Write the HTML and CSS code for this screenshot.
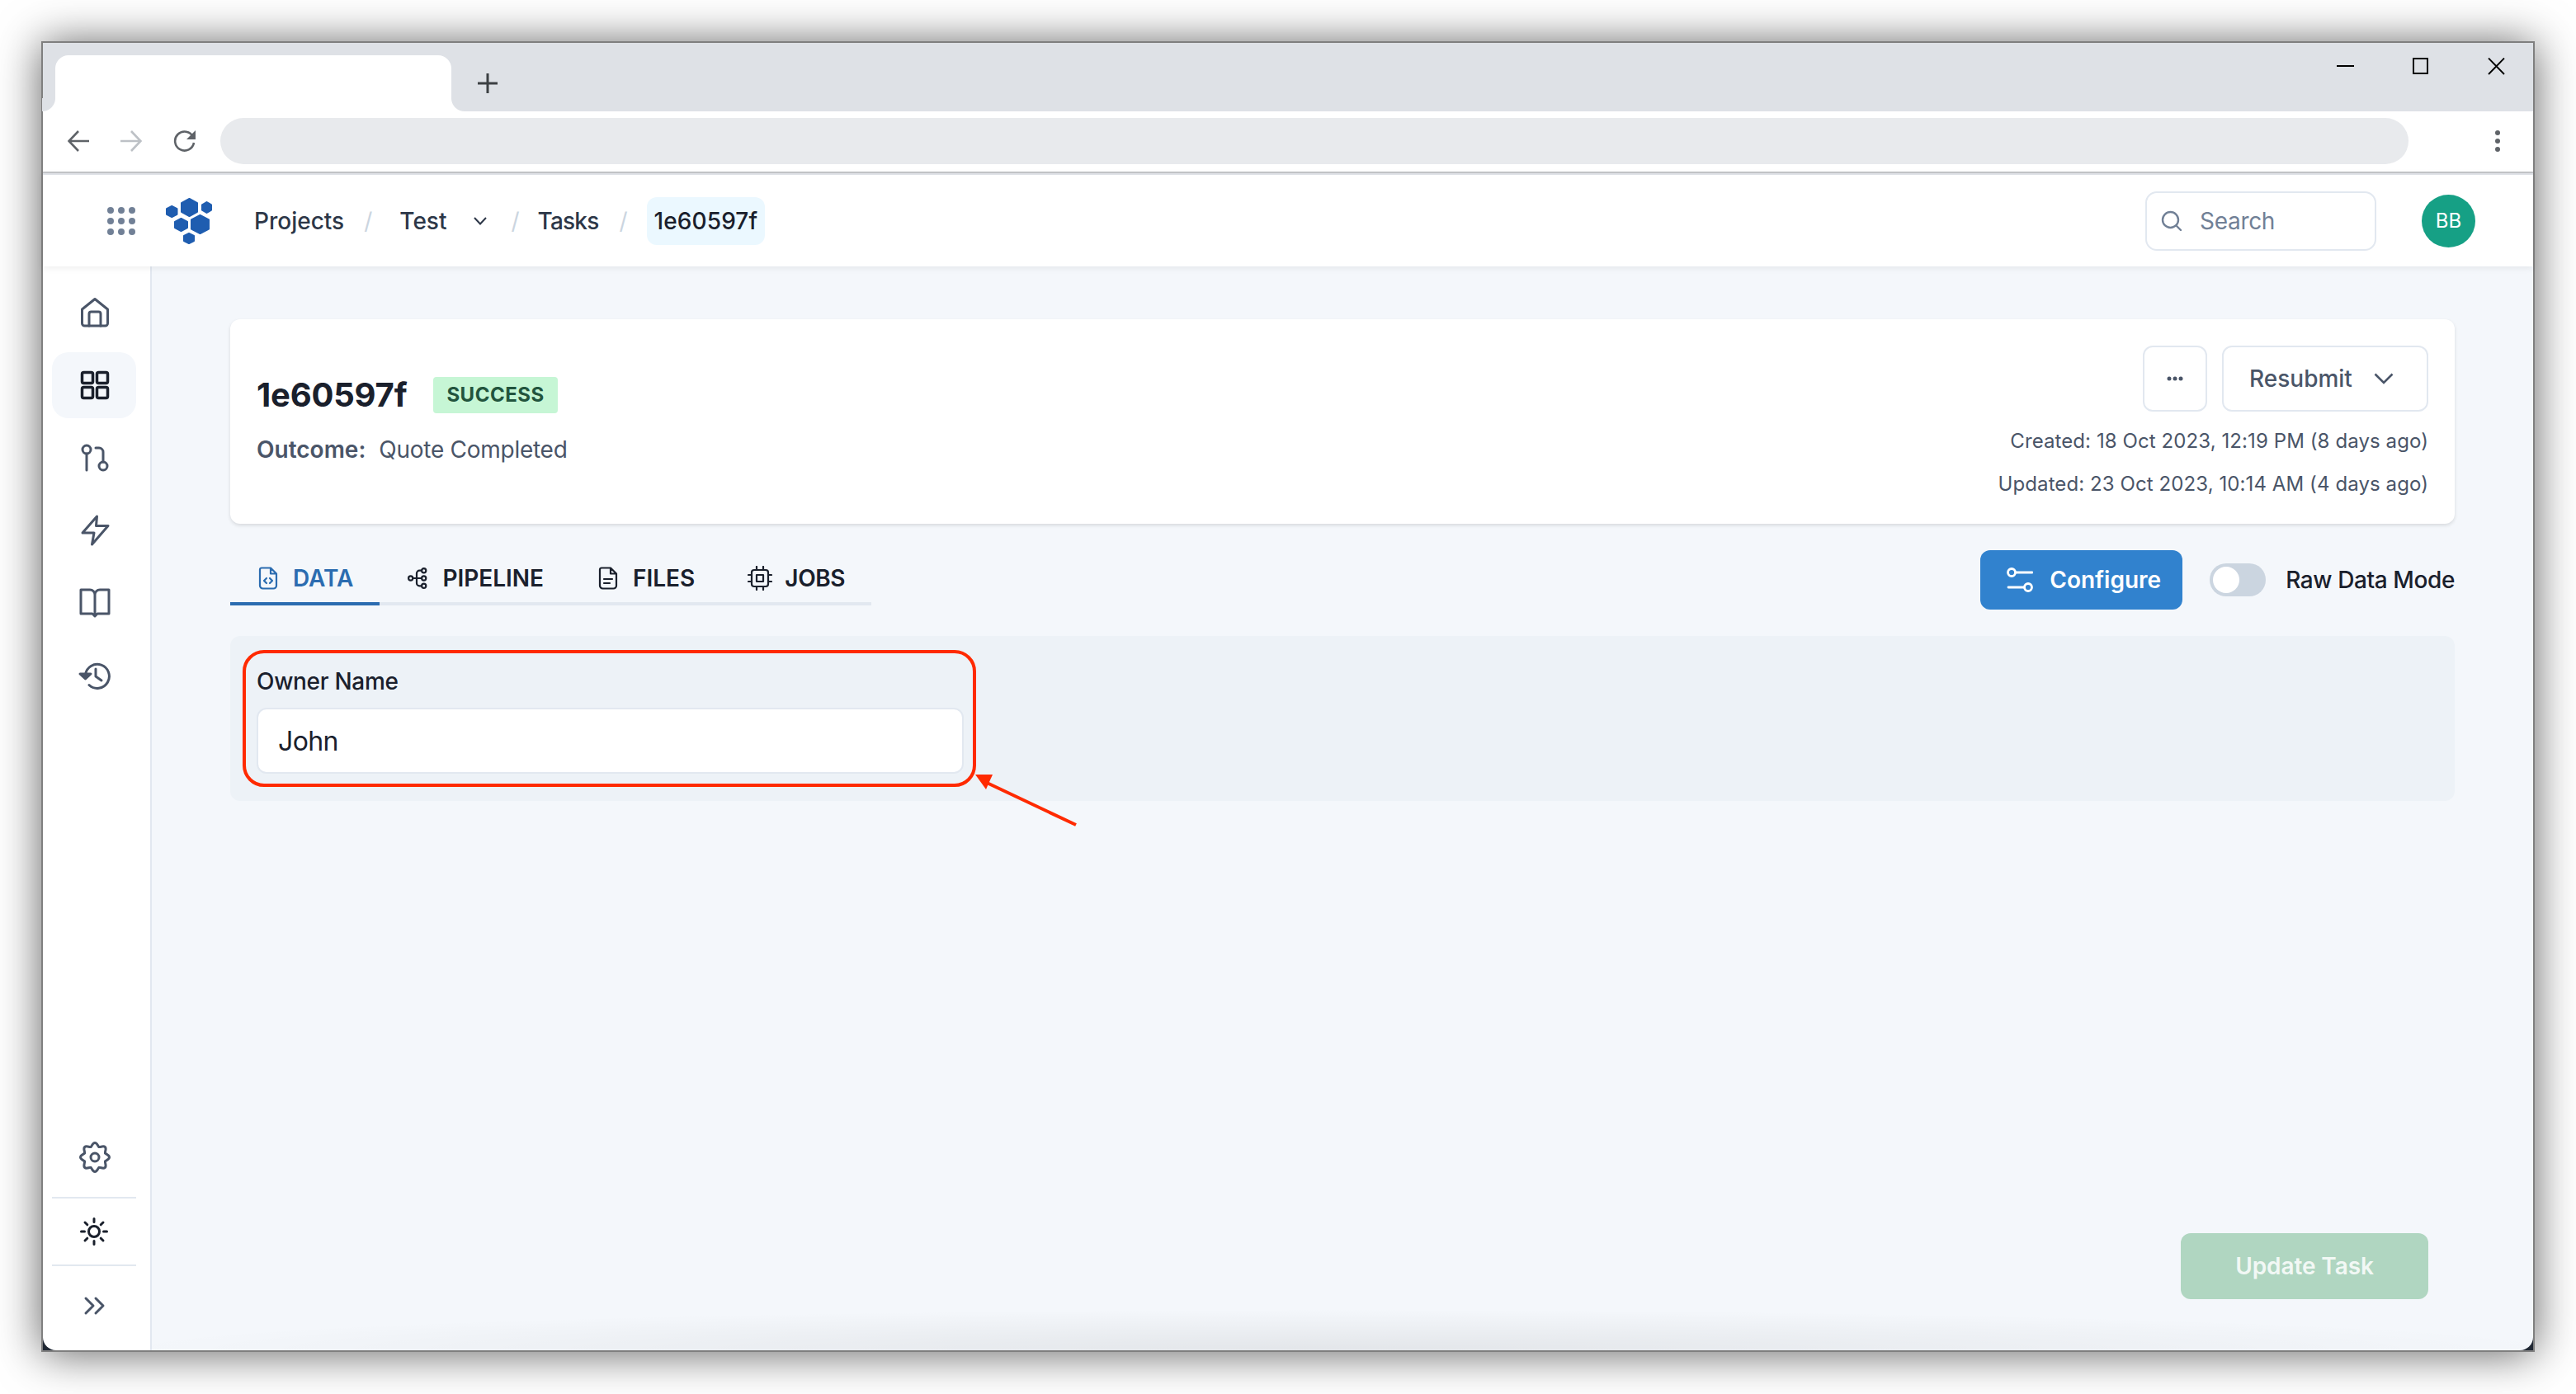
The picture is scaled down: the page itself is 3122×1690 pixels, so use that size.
FILE: index.html
```html
<!DOCTYPE html>
<html lang="en">
<head>
<meta charset="utf-8">
<title>Task 1e60597f</title>
<link rel="stylesheet" href="styles.css">
</head>
<body>
<div class="window">
  <div class="tabstrip">
    <div class="tab"></div>
    <svg class="newtab" width="24" height="24" viewBox="0 0 24 24"><path d="M12 0V24M0 12H24" stroke="#3c4043" stroke-width="3" fill="none"/></svg>
    <div class="winctrls">
      <svg class="winmin" width="22" height="22" viewBox="0 0 22 22"><path d="M1 10H22" stroke="#000" stroke-width="2"/></svg>
      <svg width="22" height="22" viewBox="0 0 22 22"><rect x="4" y="1" width="17" height="18" fill="none" stroke="#000" stroke-width="2"/></svg>
      <svg width="22" height="22" viewBox="0 0 22 22"><path d="M2 0.500L21 20M21 0.500L2 20" stroke="#000" stroke-width="1.800" fill="none"/></svg>
    </div>
  </div>
  <div class="toolbar">
    <svg class="navicon" width="26" height="26" viewBox="0 0 26 26"><path d="M26 13H2M13 1L1.500 13L13 25" stroke="#5f6368" stroke-width="2.600" fill="none"/></svg>
    <svg class="navicon" width="26" height="26" viewBox="0 0 26 26"><path d="M0 13H24M13 1L24.500 13L13 25" stroke="#bdc1c6" stroke-width="2.600" fill="none"/></svg>
    <svg class="navicon" width="28" height="26" viewBox="0 0 28 26"><path d="M24 8A11.500 11.500 0 1 0 25 15" stroke="#5f6368" stroke-width="2.600" fill="none"/><path d="M27 0V11H16Z" fill="#5f6368"/></svg>
    <div class="omnibox"></div>
    <div class="kebab"><i></i><i></i><i></i></div>
  </div>
  <header class="apphead">
    <svg class="appgrid" width="34" height="34" viewBox="0 0 34 34" fill="#718096"><circle cx="4" cy="4" r="4"/><circle cx="17" cy="4" r="4"/><circle cx="30" cy="4" r="4"/><circle cx="4" cy="17" r="4"/><circle cx="17" cy="17" r="4"/><circle cx="30" cy="17" r="4"/><circle cx="4" cy="30" r="4"/><circle cx="17" cy="30" r="4"/><circle cx="30" cy="30" r="4"/></svg>
    <svg class="logo" width="56" height="56" viewBox="0 0 56 56"><polygon points="7.250,10 13.500,13.250 13.500,19.750 7.250,23 1,19.750 1,13.250"/><polygon points="28.500,1 38,6.250 38,16.750 28.500,22 19,16.750 19,6.250"/><polygon points="49.500,5 55,8.250 55,14.750 49.500,18 44,14.750 44,8.250"/><polygon points="18.500,25 26,29 26,36 18.500,40 11,36 11,29"/><polygon points="41.500,21 52,26.500 52,37.500 41.500,43 31,37.500 31,26.500"/><polygon points="28,43 34,46 34,52 28,55 22,52 22,46"/></svg>
    <nav class="crumbs">
      <span class="crumb">Projects</span>
      <span class="sep">/</span>
      <span class="crumb">Test</span>
      <svg class="crumbchev" width="16" height="10" viewBox="0 0 16 10"><path d="M1 1L8 8.500L15 1" stroke="#2d3748" stroke-width="2" fill="none"/></svg>
      <span class="sep sep-b">/</span>
      <span class="crumb crumb-tight">Tasks</span>
      <span class="sep sep-c">/</span>
      <span class="crumb chip">1e60597f</span>
    </nav>
    <div class="search">
      <svg width="26" height="26" viewBox="0 0 26 26"><circle cx="11.500" cy="11.500" r="9.500" stroke="#718096" stroke-width="2.400" fill="none"/><path d="M18.500 18.500L24 24" stroke="#718096" stroke-width="2.400" fill="none" stroke-linecap="round"/></svg>
      <span>Search</span>
    </div>
    <div class="avatar">BB</div>
  </header>
  <div class="appbody">
    <aside class="sidebar">
      <div class="sideitem"><svg width="40" height="40" viewBox="0 0 40 40" class="sicon"><path d="M4.500 16L20 3.500L35.500 16V33A3 3 0 0 1 32.500 36H7.500A3 3 0 0 1 4.500 33Z"/><path d="M13 36V21.500A2.500 2.500 0 0 1 15.500 19H24.500A2.500 2.500 0 0 1 27 21.500V36"/></svg></div>
      <div class="sideitem active"><svg width="40" height="40" viewBox="0 0 40 40" class="sicon"><rect x="4.500" y="4.500" width="13" height="13" rx="2"/><rect x="22.500" y="4.500" width="13" height="13" rx="2"/><rect x="4.500" y="22.500" width="13" height="13" rx="2"/><rect x="22.500" y="22.500" width="13" height="13" rx="2"/></svg></div>
      <div class="sideitem"><svg width="40" height="40" viewBox="0 0 40 40" class="sicon"><circle cx="10" cy="10" r="5"/><path d="M10 15V35"/><circle cx="30" cy="30" r="5"/><path d="M30 25V13A5 5 0 0 0 25 8H21"/></svg></div>
      <div class="sideitem"><svg width="40" height="40" viewBox="0 0 40 40" class="sicon"><path d="M22.500 3L5 23H19L16.500 37L36 14.500H21.500Z"/></svg></div>
      <div class="sideitem"><svg width="40" height="40" viewBox="0 0 40 40" class="sicon"><path d="M20 10A6 6 0 0 0 14 4H3V33H17L20 36L23 33H37V4H26A6 6 0 0 0 20 10V34"/></svg></div>
      <div class="sideitem"><svg width="40" height="40" viewBox="0 0 40 40" class="sicon"><path d="M8.500 19A14.500 14.500 0 1 1 13 31.500"/><path d="M21 12V21L28 26"/><path d="M2 18L8.500 24L15 18H2Z" class="solid"/></svg></div>
      <div class="sidefoot">
        <div class="sideitem"><svg width="40" height="40" viewBox="0 0 40 40" class="sicon"><circle cx="20" cy="20" r="5"/><path id="tooth" d="M14.830 7.530C16.300 6.920 17 2.500 20 2.500S23.700 6.920 25.170 7.530"/><use href="#tooth" transform="rotate(45 20 20)"/><use href="#tooth" transform="rotate(90 20 20)"/><use href="#tooth" transform="rotate(135 20 20)"/><use href="#tooth" transform="rotate(180 20 20)"/><use href="#tooth" transform="rotate(225 20 20)"/><use href="#tooth" transform="rotate(270 20 20)"/><use href="#tooth" transform="rotate(315 20 20)"/></svg></div>
        <div class="sidediv"></div>
        <div class="sideitem sun"><svg width="36" height="36" viewBox="0 0 36 36" class="sicon dark"><circle cx="18" cy="18" r="6.500"/><path d="M18 2.500V6.500M18 29.500V33.500M2.500 18H6.500M29.500 18H33.500M7 7L9.800 9.800M26.200 26.200L29 29M7 29L9.800 26.200M26.200 9.800L29 7"/></svg></div>
        <div class="sidediv"></div>
        <div class="sideitem"><svg width="40" height="40" viewBox="0 0 40 40" class="sicon"><path d="M9 11L18 20L9 29M21 11L30 20L21 29"/></svg></div>
      </div>
    </aside>
    <main class="content">
      <section class="card">
        <div class="cardleft">
          <div class="titlerow">
            <h1 class="title">1e60597f</h1>
            <span class="badge">SUCCESS</span>
          </div>
          <p class="outcome"><b>Outcome:</b><span class="outcomeval">Quote Completed</span></p>
        </div>
        <div class="cardright">
          <div class="actions">
            <button class="btn btn-more">
              <svg width="20" height="6" viewBox="0 0 20 6" fill="#4a5568"><circle cx="3" cy="3" r="2.500"/><circle cx="10" cy="3" r="2.500"/><circle cx="17" cy="3" r="2.500"/></svg>
            </button>
            <button class="btn btn-resubmit">Resubmit
              <svg width="24" height="14" viewBox="0 0 24 14"><path d="M1.500 1.500L12 12L22.500 1.500" stroke="#4a5568" stroke-width="2.600" fill="none"/></svg>
            </button>
          </div>
          <p class="stamp">Created: 18 Oct 2023, 12:19 PM (8 days ago)</p>
          <p class="stamp">Updated: 23 Oct 2023, 10:14 AM (4 days ago)</p>
        </div>
      </section>
      <div class="tabsrow">
        <div class="tabs">
          <div class="tabitem on">
            <svg width="28" height="28" viewBox="0 0 28 28" class="ticon"><path d="M6 1.500H17L24 8.500V23A3.500 3.500 0 0 1 20.500 26.500H7.500A3.500 3.500 0 0 1 4 23V3.500A2 2 0 0 1 6 1.500ZM17 1.500V8.500H24"/><path d="M12 14L9 17L12 20M16 14L19 17L16 20"/></svg>
            <span>DATA</span>
          </div>
          <div class="tabitem">
            <svg width="28" height="28" viewBox="0 0 28 28" class="ticon"><circle cx="5.700" cy="14" r="2.600"/><circle cx="21.700" cy="4.700" r="2.600"/><circle cx="21.700" cy="14" r="2.600"/><circle cx="21.700" cy="23.300" r="2.600"/><path d="M8.300 14H19M13 14V8A3.300 3.300 0 0 1 16.300 4.700H19M13 14V20A3.300 3.300 0 0 0 16.300 23.300H19"/></svg>
            <span>PIPELINE</span>
          </div>
          <div class="tabitem">
            <svg width="28" height="28" viewBox="0 0 28 28" class="ticon"><path d="M6 1.500H17L24 8.500V23A3.500 3.500 0 0 1 20.500 26.500H7.500A3.500 3.500 0 0 1 4 23V3.500A2 2 0 0 1 6 1.500ZM17 1.500V8.500H24"/><path d="M9 15H19M9 20H16"/></svg>
            <span>FILES</span>
          </div>
          <div class="tabitem tabitem-jobs">
            <svg width="30" height="30" viewBox="0 0 30 30" class="ticon"><rect x="5" y="5" width="20" height="20" rx="3"/><rect x="11" y="11" width="8" height="8"/><path d="M11 1V5M19 1V5M11 25V29M19 25V29M1 11H5M1 19H5M25 11H29M25 19H29"/></svg>
            <span>JOBS</span>
          </div>
        </div>
        <div class="tabtools">
          <button class="configure">
            <svg width="32" height="32" viewBox="0 0 32 32"><circle cx="6" cy="7" r="4.500"/><path d="M11 7H31M2 25H21"/><circle cx="26" cy="25" r="4.500"/></svg>
            Configure
          </button>
          <span class="toggle"><i></i></span>
          <span class="rawlabel">Raw Data Mode</span>
        </div>
      </div>
      <section class="panel">
        <label class="fieldlabel">Owner Name</label>
        <div class="field">John</div>
      </section>
      <button class="update">Update Task</button>
    </main>
  </div>
  <svg class="annot" width="1020" height="225" viewBox="0 0 1020 225">
    <rect x="2" y="2" width="885" height="162" rx="24" fill="none" stroke="#ff2a00" stroke-width="4"/>
    <path d="M1010 212L900 160" stroke="#ff2a00" stroke-width="4" fill="none"/>
    <path d="M888 151L909 151L901 169Z" fill="#ff2a00"/>
  </svg>
</div>
</body>
</html>
```
FILE: styles.css
```css
* { box-sizing: border-box; }
html, body { margin: 0; padding: 0; background: #fff; }
body { font-family: "Inter", "Liberation Sans", sans-serif; color: #1a202c; height: 1690px; overflow: hidden; padding: 50px 0 0 50px; }
p, h1 { margin: 0; }
button { font-family: inherit; cursor: pointer; }

.window {
  position: relative;
  width: 3022px;
  height: 1589px;
  border: 2px solid #7f7f7f;
  display: flex;
  flex-direction: column;
  background: #1f2733;
  box-shadow: 0 2px 50px rgba(0, 0, 0, .62);
}

/* browser chrome */
.tabstrip {
  height: 83px;
  flex: none;
  background: #dee1e6;
  padding: 15px 0 0 15px;
  display: flex;
}
.tab {
  position: relative;
  width: 480px;
  height: 68px;
  background: #fff;
  border-radius: 16px 16px 0 0;
}
.tab::before, .tab::after {
  content: "";
  position: absolute;
  bottom: 0;
  width: 16px;
  height: 16px;
}
.tab::before { left: -16px; background: radial-gradient(circle at 0 0, #dee1e6 15.5px, #fff 16.5px); }
.tab::after { right: -16px; background: radial-gradient(circle at 100% 0, #dee1e6 15.5px, #fff 16.5px); }
.newtab { margin: 22px 0 0 32px; flex: none; }
.winctrls {
  margin-left: auto;
  margin-right: 34px;
  margin-top: 3px;
  display: flex;
  gap: 71px;
}
.winmin { margin-right: -3px; }
.toolbar {
  height: 75px;
  flex: none;
  background: #fff;
  border-bottom: 2px solid #c4c6c9;
  display: flex;
  align-items: center;
  padding: 0 0 2px 30px;
}
.navicon { flex: none; margin-right: 38px; }
.navicon + .navicon + .navicon { margin-right: 29px; }
.omnibox {
  width: 2652px;
  height: 56px;
  background: #e8eaed;
  border-radius: 28px;
  flex: none;
}
.kebab { margin-left: 105px; display: flex; flex-direction: column; gap: 4px; }
.kebab i { display: block; width: 6px; height: 6px; border-radius: 50%; background: #5f6368; }

/* app header */
.apphead {
  position: relative;
  z-index: 2;
  height: 113px;
  flex: none;
  background: #fff;
  border-top: 2px solid #dee1e6;
  box-shadow: 0 2px 8px rgba(0, 0, 0, .07);
  display: flex;
  align-items: center;
  padding-left: 78px;
}
.appgrid { flex: none; margin-right: 37px; }
.logo { flex: none; margin-right: 51px; fill: #1f5db0; stroke: #1f5db0; stroke-width: 2; stroke-linejoin: round; }
.crumbs { display: flex; align-items: center; font-size: 28px; font-weight: 500; color: #2d3748; line-height: 58px; }
.crumb { white-space: nowrap; }
.crumb-tight { letter-spacing: -.8px; }
.sep { color: #cbd5e0; font-weight: 400; margin: 0 33px 0 24px; }
.sep-b { margin: 0 22px 0 29px; }
.sep-c { margin: 0 23px 0 25px; }
.crumbchev { margin-left: 33px; flex: none; }
.chip { background: #ebf8ff; color: #1a202c; padding: 0 9px; border-radius: 12px; letter-spacing: .1px; }
.search {
  margin-left: auto;
  width: 280px;
  height: 72px;
  border: 2px solid #e2e8f0;
  border-radius: 14px;
  display: flex;
  align-items: center;
  gap: 21px;
  padding-left: 17px;
  font-size: 28px;
  letter-spacing: -.3px;
  color: #718096;
}
.avatar {
  margin: 0 70px 0 55px;
  width: 65px;
  height: 64px;
  border-radius: 50%;
  background: #16a085;
  color: #fff;
  font-size: 24px;
  display: flex;
  align-items: center;
  justify-content: center;
}

/* body */
.appbody { flex: 1; display: flex; min-height: 0; border-radius: 0 0 16px 16px; overflow: hidden; }
.sidebar {
  width: 132px;
  flex: none;
  background: #fff;
  border-right: 2px solid #e2e8f0;
  padding: 16px 17px 14px 11px;
  display: flex;
  flex-direction: column;
  gap: 8px;
}
.sideitem {
  height: 80px;
  border-radius: 20px;
  display: flex;
  align-items: center;
  justify-content: center;
  flex: none;
}
.sideitem.active { background: #f4f7fb; }
.sun { margin-top: -8px; margin-bottom: -8px; }
.sicon { fill: none; stroke: #4a5568; stroke-width: 3; stroke-linecap: round; stroke-linejoin: round; margin-left: 2px; }
.sicon .solid { fill: #4a5568; }
.active .sicon, .sicon.dark { stroke: #1a202c; }
.sicon.dark { margin-left: 0; }
.active .sicon { stroke-width: 3.500; }
.sidefoot { margin-top: auto; display: flex; flex-direction: column; gap: 8px; }
.sidediv { height: 2px; background: #e2e8f0; flex: none; }

.content {
  flex: 1;
  min-width: 0;
  background: radial-gradient(ellipse 1500px 50px at 50% 100%, rgba(0, 0, 0, .07), transparent), #f4f7fb;
  padding: 64px 95px 62px 95px;
  display: flex;
  flex-direction: column;
}
.card {
  height: 248px;
  flex: none;
  background: #fff;
  border-radius: 12px;
  box-shadow: 0 2px 4px rgba(0, 0, 0, .12);
  padding: 32px;
  display: flex;
  justify-content: space-between;
}
.cardleft { display: flex; flex-direction: column; justify-content: center; }
.titlerow { display: flex; align-items: center; gap: 32px; }
.title { font-size: 40px; font-weight: 700; line-height: 44px; letter-spacing: -.2px; color: #1a202c; }
.badge {
  background: #c6f6d5;
  color: #22543d;
  font-size: 24px;
  font-weight: 700;
  letter-spacing: .5px;
  line-height: 44px;
  padding: 0 16px;
  border-radius: 4px;
}
.outcome { font-size: 28px; color: #4a5568; line-height: 40px; margin-top: 24px; display: flex; gap: 16px; }
.outcome b { font-weight: 600; }
.outcomeval { letter-spacing: -.27px; }
.cardright { display: flex; flex-direction: column; align-items: flex-end; }
.actions { display: flex; gap: 18px; margin-bottom: 18px; }
.btn {
  height: 80px;
  background: #fff;
  border: 2px solid #e2e8f0;
  border-radius: 12px;
  display: flex;
  align-items: center;
  color: #4a5568;
  font-size: 28px;
  font-weight: 500;
}
.btn-more { width: 78px; padding: 0; justify-content: center; }
.btn-resubmit { width: 250px; justify-content: space-between; padding: 0 40px 0 31px; }
.stamp { font-size: 24px; line-height: 36px; letter-spacing: .09px; color: #4a5568; margin-bottom: 16px; white-space: nowrap; }

.tabsrow { display: flex; justify-content: space-between; margin-top: 32px; height: 72px; flex: none; }
.tabs { display: flex; height: 67px; border-bottom: 4px solid #e2e8f0; align-self: flex-start; width: 777px; }
.tabitem {
  display: flex;
  align-items: center;
  gap: 16px;
  padding: 5px 32px 0;
  font-size: 28px;
  font-weight: 600;
  color: #1a202c;
  height: 67px;
  flex: none;
  border-bottom: 4px solid transparent;
}
.tabitem-jobs { gap: 15px; letter-spacing: -.4px; }
.tabitem.on { color: #2b6cb0; border-bottom-color: #2b6cb0; }
.ticon { fill: none; stroke: currentColor; stroke-width: 2.200; stroke-linecap: round; stroke-linejoin: round; flex: none; }
.tabtools { display: flex; align-items: center; }
.configure {
  width: 245px;
  height: 72px;
  background: #3182ce;
  color: #fff;
  border: 0;
  border-radius: 12px;
  font-size: 28px;
  font-weight: 600;
  display: flex;
  align-items: center;
  gap: 20px;
  padding: 0 0 0 32px;
}
.configure svg { fill: none; stroke: #fff; stroke-width: 2.800; stroke-linecap: round; flex: none; }
.toggle { margin-left: 33px; width: 68px; height: 40px; border-radius: 20px; background: #cbd5e0; padding: 4px; }
.toggle i { display: block; width: 32px; height: 32px; border-radius: 50%; background: #fff; }
.rawlabel { margin-left: 24px; font-size: 28px; font-weight: 500; letter-spacing: -.4px; color: #1a202c; white-space: nowrap; }

.panel {
  margin-top: 32px;
  height: 200px;
  flex: none;
  background: #edf2f7;
  border-radius: 12px;
  padding: 32px 32px 0;
}
.fieldlabel { display: block; font-size: 28px; font-weight: 500; line-height: 40px; letter-spacing: -.3px; color: #1a202c; margin-top: 3px; margin-bottom: 12px; }
.field {
  width: 857px;
  height: 80px;
  background: #fff;
  border: 2px solid #e2e8f0;
  border-radius: 12px;
  padding: 0 24px;
  font-size: 32px;
  line-height: 78px;
  letter-spacing: -.6px;
  color: #1a202c;
}
.update {
  margin-top: auto;
  margin-right: 32px;
  align-self: flex-end;
  width: 300px;
  height: 80px;
  background: #b0d6c1;
  color: rgba(255, 255, 255, .85);
  border: 0;
  border-radius: 12px;
  font-size: 28px;
  font-weight: 600;
  letter-spacing: -.1px;
}
.annot { position: absolute; left: 242px; top: 736px; z-index: 3; pointer-events: none; }
```
